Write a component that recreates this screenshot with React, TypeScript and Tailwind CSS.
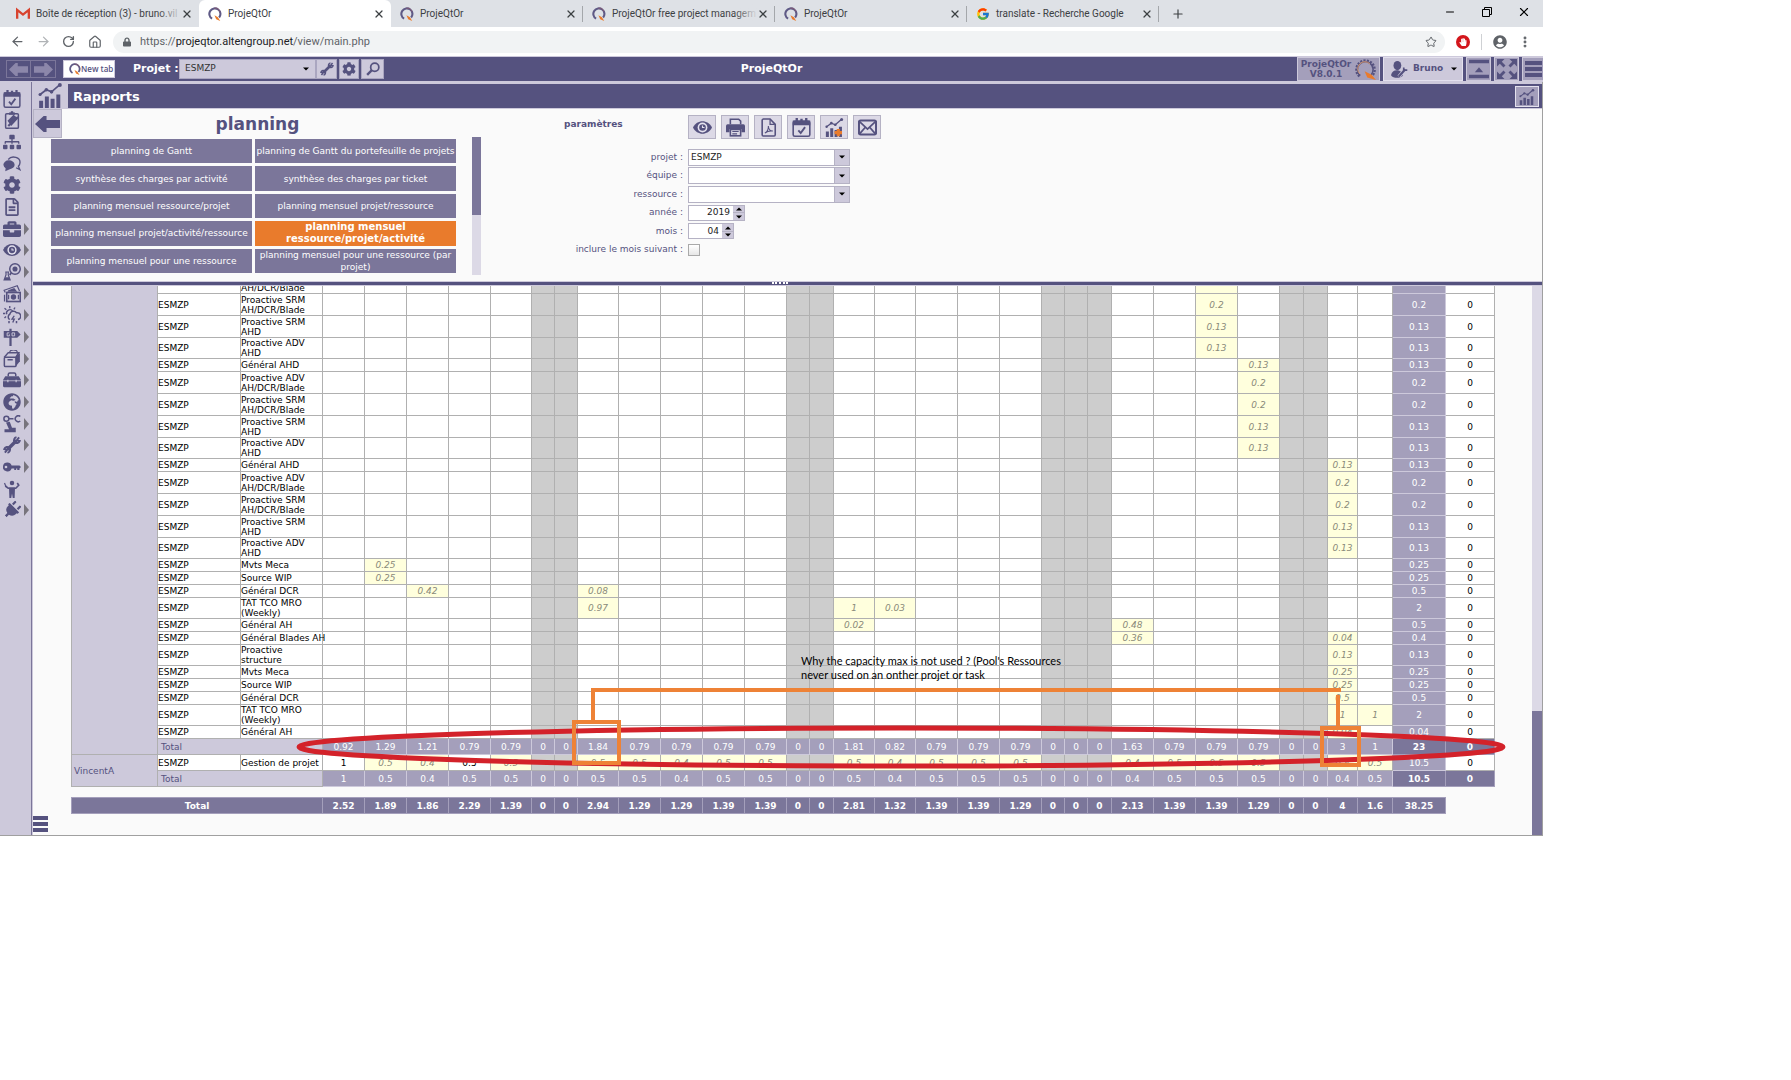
import React from 'react';
import {
  FaBriefcase, FaCog, FaGlobeAfrica, FaLock, FaPlug, FaRegFileAlt, FaSitemap, FaUserCircle, FaHandPaper,
} from 'react-icons/fa';
import { FcGoogle } from 'react-icons/fc';
import { X, Plus, Minus, Star, Home, RotateCw, ArrowLeft, ArrowRight, MoreVertical } from 'lucide-react';

type IconProps = { className?: string };

const Svg: React.FC<{ className?: string; children: React.ReactNode }> = ({ className, children }) => (
  <svg viewBox="0 0 24 24" fill="none" stroke="currentColor" strokeWidth="2" className={className} aria-hidden="true">
    {children}
  </svg>
);

const QLogo: React.FC<IconProps> = ({ className }) => (
  <svg viewBox="1 0 22 24" fill="none" className={className} aria-hidden="true">
    <path d="M7 20 A9.5 9.5 0 1 1 19 18" stroke="#5f5a86" strokeWidth="3.6" />
    <path d="M11 2 A9 9 0 0 1 20.5 8" stroke="#8c5a70" strokeWidth="1.4" />
    <path d="M11 14 L17 17.5 L21 24 L14 21 Z" fill="#e97b2c" />
  </svg>
);

const GearLogo: React.FC<IconProps> = ({ className }) => (
  <Svg className={className}>
    <path d="M5 20 A10.5 10.5 0 1 1 20 19" stroke="#55527f" strokeWidth="2.6" strokeDasharray="2.4 1.4" />
    <path d="M6 19 A9 9 0 1 1 18.5 18" stroke="#55527f" strokeWidth="1.8" />
    <path d="M5.5 17 A8 8 0 0 1 17 5.5" stroke="#e9a06a" strokeWidth="1" />
    <path d="M11 14 L19 18 L24 24 L14 21 Z" fill="#e97b2c" stroke="none" />
  </Svg>
);

const GmailIcon: React.FC<IconProps> = ({ className }) => (
  <Svg className={className}>
    <path d="M2 20 V5 L12 13 L22 5 V20" stroke="#d8432f" strokeWidth="4" />
  </Svg>
);

const CalendarIcon: React.FC<IconProps> = ({ className }) => (
  <Svg className={className}>
    <rect x="1.5" y="4" width="21" height="19" rx="2" />
    <path d="M2 4 H22 V8 H2 Z" fill="currentColor" />
    <path d="M6 0 V5 M12 1 V5 M18 0 V5" strokeWidth="3" />
    <path d="M8 15.5 L11 19 L16.5 11.5" strokeWidth="2.4" />
  </Svg>
);

const TicketIcon: React.FC<IconProps> = ({ className }) => (
  <Svg className={className}>
    <rect x="3.5" y="3.5" width="17" height="19.5" rx="1.5" />
    <path d="M8 5 V2 H10 A2 2 0 0 1 14 2 H16 V5 Z" fill="currentColor" stroke="none" />
    <path d="M6 13 L14 5 L20 10 L11 20 Z" fill="currentColor" stroke="none" />
    <path d="M7 20 L20 8" strokeWidth="3" />
  </Svg>
);

const ChatIcon: React.FC<IconProps> = ({ className }) => (
  <Svg className={className}>
    <path d="M7 6 A8.5 7 0 0 1 22.5 11 A7 6 0 0 1 20.5 15 L22.5 19.5 L17.5 17" strokeWidth="1.8" />
    <path d="M0.5 13 A7.5 6 0 1 1 9 19 L3 21.5 L3.5 17.5 A6 6 0 0 1 0.5 13 Z" fill="currentColor" stroke="none" />
  </Svg>
);

const EyeIcon: React.FC<IconProps> = ({ className }) => (
  <Svg className={className}>
    <path d="M0 12 C5 1.5 19 1.5 24 12 C19 22.5 5 22.5 0 12 Z" fill="currentColor" stroke="none" />
    <circle cx="12" cy="12" r="6.2" fill="#e4e1ee" stroke="none" />
    <circle cx="12" cy="12" r="4.2" fill="currentColor" stroke="none" />
    <path d="M12 9.5 V12 H14.5" stroke="#e4e1ee" strokeWidth="1.4" />
  </Svg>
);

const FlaskIcon: React.FC<IconProps> = ({ className }) => (
  <Svg className={className}>
    <circle cx="16" cy="8" r="7" />
    <circle cx="16" cy="8" r="3.4" fill="currentColor" stroke="none" />
    <path d="M4 12 V16 L1.5 22.5 H9.5 L7 16 V12 M3 12 H8" strokeWidth="1.6" />
    <path d="M3 19 H8 L9.5 22.5 H1.5 Z" fill="currentColor" stroke="none" />
    <path d="M11 13 L9 16" strokeWidth="2.4" />
  </Svg>
);

const MoneyIcon: React.FC<IconProps> = ({ className }) => (
  <Svg className={className}>
    <path d="M3 10 L1.5 7 L19 1 L22 8" strokeWidth="1.6" />
    <path d="M7 7 L15 4 L19 9 H6 Z" fill="currentColor" stroke="none" />
    <rect x="5" y="10" width="18" height="12" strokeWidth="2.2" />
    <circle cx="14" cy="16" r="3.6" fill="currentColor" stroke="none" />
    <path d="M7.5 13 V19 M20.5 13 V19" strokeWidth="1.6" />
    <path d="M2 13 V22" strokeWidth="1.6" />
  </Svg>
);

const WeatherIcon: React.FC<IconProps> = ({ className }) => (
  <Svg className={className}>
    <path d="M9 0 V3 M2 3 L4.5 5 M0 10 H3 M16 2 L14.5 4.5 M2 16 L4 14" strokeWidth="1.8" />
    <path d="M5 11 A4.5 4.5 0 0 1 13 7" strokeWidth="1.8" />
    <path d="M9 18 A4 4 0 0 1 9 11 A5 5 0 0 1 18 9 A4.5 4.5 0 0 1 20 18" />
    <path d="M15 13 L12 17.5 H15 L13 22" strokeWidth="1.8" />
    <path d="M8 20 V23 M18 20 V23" />
  </Svg>
);

const SignIcon: React.FC<IconProps> = ({ className }) => (
  <Svg className={className}>
    <path d="M1 4 H19 L23.5 8.5 L19 13 H1 Z" fill="currentColor" stroke="none" />
    <path d="M10 1 V24" strokeWidth="3" />
    <path d="M8.5 6.5 H5.5 V10.5 H8.5 V8.5 M12 6.5 H15.5 V10.5 H12 Z" stroke="#cdc9db" strokeWidth="1.2" />
  </Svg>
);

const BoxIcon: React.FC<IconProps> = ({ className }) => (
  <Svg className={className}>
    <path d="M1.5 10 L7 3.5 H21 L17 10" />
    <path d="M9 3 A5 3 0 0 1 19 3" strokeWidth="1.6" />
    <path d="M17 9 L22.5 4 V15 L17 22 Z" fill="currentColor" stroke="none" />
    <rect x="1.8" y="9.5" width="15.5" height="12.5" rx="1.5" />
    <path d="M6 13 H13" />
  </Svg>
);

const ToolboxIcon: React.FC<IconProps> = ({ className }) => (
  <Svg className={className}>
    <path d="M7 7 V4.5 A2 2 0 0 1 9 2.8 H15 A2 2 0 0 1 17 4.5 V7" />
    <path d="M3 7 H21 L24 12 V20 A1.5 1.5 0 0 1 22.5 21.5 H1.5 A1.5 1.5 0 0 1 0 20 V12 Z" fill="currentColor" stroke="none" />
    <path d="M0 13 H24" stroke="#cdc9db" strokeWidth="1" />
    <path d="M6.5 11.5 V15 M17.5 11.5 V15" stroke="#cdc9db" strokeWidth="1.6" />
  </Svg>
);

const RobotIcon: React.FC<IconProps> = ({ className }) => (
  <Svg className={className}>
    <circle cx="4.5" cy="5" r="3.3" />
    <path d="M8 5 H14" />
    <path d="M23 2 A4 4 0 1 0 23 8" />
    <path d="M4 10 L9 9 L12 17 H17 V23 H2 V19 H8 Z" fill="currentColor" stroke="none" />
  </Svg>
);

const KeyIcon: React.FC<IconProps> = ({ className }) => (
  <Svg className={className}>
    <path d="M6 6 A6 6 0 1 0 11.5 14 H15 V16 H17.5 V14 H19 V16 H22 V14 L24 12 L22 10 H11.5 A6 6 0 0 0 6 6 Z M4 10.2 A1.8 1.8 0 1 1 4 13.8 A1.8 1.8 0 1 1 4 10.2 Z" fill="currentColor" fillRule="evenodd" stroke="none" />
  </Svg>
);

const PlugIcon: React.FC<IconProps> = ({ className }) => (
  <span className={className}><FaPlug className="w-full h-full rotate-45" /></span>
);

const PersonIcon: React.FC<IconProps> = ({ className }) => (
  <Svg className={className}>
    <circle cx="12" cy="4" r="3" fill="currentColor" stroke="none" />
    <path d="M3 8 L7 11 H17 L21 7 L19 4" strokeWidth="2.2" />
    <path d="M8 10 H16 L15.5 24 H13 L12 18 L11 24 H8.5 Z" fill="currentColor" stroke="none" />
    <path d="M2 4 L4 9" strokeWidth="1.6" />
  </Svg>
);

const ChartIcon: React.FC<IconProps & { badge?: boolean }> = ({ className, badge }) => (
  <Svg className={className}>
    <path d="M3 17 V24 M8.5 13 V24 M14 15 V24 M19.5 11 V24" strokeWidth="3.8" />
    <path d="M2 11 L8 6.5 L13 8.5 L21 1.5" strokeWidth="1.6" />
    <circle cx="2" cy="11" r="1.5" fill="currentColor" stroke="none" />
    <circle cx="8" cy="6.5" r="1.7" fill="currentColor" stroke="none" />
    <circle cx="13" cy="8.5" r="1.7" fill="currentColor" stroke="none" />
    <circle cx="21" cy="2" r="1.9" fill="currentColor" stroke="none" />
    {badge && <path d="M12 18.5 H21.5 M16.8 14 V23" stroke="#e97b2c" strokeWidth="4" />}
  </Svg>
);

const PrinterIcon: React.FC<IconProps> = ({ className }) => (
  <Svg className={className}>
    <path d="M5.5 8 V1.5 H16 L18.5 4 V8" />
    <path d="M2 8 H22 A2 2 0 0 1 24 10 V18 H19.5 V14 H4.5 V18 H0 V10 A2 2 0 0 1 2 8 Z" fill="currentColor" stroke="none" />
    <rect x="5.5" y="14.5" width="13" height="8" />
    <path d="M8 17 H16 M8 20 H14" strokeWidth="1.4" />
  </Svg>
);

const PdfIcon: React.FC<IconProps> = ({ className }) => (
  <Svg className={className}>
    <path d="M4 3 A1.8 1.8 0 0 1 5.5 1.2 H14 L20.5 8 V21 A1.8 1.8 0 0 1 19 22.8 H5.5 A1.8 1.8 0 0 1 4 21 Z" />
    <path d="M14 1.5 V8 H20" strokeWidth="1.6" />
    <path d="M7.5 19 C10 17.5 12 13.5 11.8 10 C12 14 14 16.5 17.5 16.5 C14 16 10 17 7.5 19" strokeWidth="1.3" />
  </Svg>
);

const MailIcon: React.FC<IconProps> = ({ className }) => (
  <Svg className={className}>
    <rect x="1.2" y="3.2" width="21.6" height="17.6" rx="2" strokeWidth="2.6" />
    <path d="M2 4.5 L12 14 L22 4.5 M2 20 L9 12 M22 20 L15 12" strokeWidth="2.2" />
  </Svg>
);

const WrenchIcon: React.FC<IconProps> = ({ className }) => (
  <Svg className={className}>
    <path d="M6 18 L18 6" strokeWidth="4.4" />
    <path d="M21.5 1.8 L18.5 5.5 L22.3 6.5 A4.2 4.2 0 0 1 15.2 8 A4.4 4.4 0 0 1 18 1.5 M2.5 22.2 L5.5 18.5 L1.7 17.5 A4.2 4.2 0 0 1 8.8 16 A4.4 4.4 0 0 1 6 22.5" strokeWidth="2.6" />
  </Svg>
);

const SearchIcon: React.FC<IconProps> = ({ className }) => (
  <Svg className={className}>
    <circle cx="15" cy="9" r="7" strokeWidth="3" />
    <path d="M10 14 L2 22" strokeWidth="4" />
  </Svg>
);

const UserIcon: React.FC<IconProps> = ({ className }) => (
  <Svg className={className}>
    <ellipse cx="9" cy="6.5" rx="5.5" ry="6.5" fill="currentColor" stroke="none" />
    <path d="M0 20 C1 15 4 13 8 13 C12 13 16 15 17 20 C14 25 3 25 0 20 Z" fill="currentColor" stroke="none" />
    <path d="M11 22 L20 12" stroke="#cdc9db" strokeWidth="5" />
    <path d="M11 22 L20 12" strokeWidth="3" />
    <path d="M18 9 V13 H23" strokeWidth="2.4" />
  </Svg>
);

const ExpandIcon: React.FC<IconProps> = ({ className }) => (
  <Svg className={className}>
    <path d="M9 9 L2.5 2.5 M15 9 L21.5 2.5 M9 15 L2.5 21.5 M15 15 L21.5 21.5" strokeWidth="3.4" />
    <path d="M0 0 H9 L0 9 Z M24 0 H15 L24 9 Z M0 24 V15 L9 24 Z M24 24 V15 L15 24 Z" fill="currentColor" stroke="none" />
  </Svg>
);

const CollapseIcon: React.FC<IconProps> = ({ className }) => (
  <Svg className={className}>
    <path d="M0 3 H24 M0 21 H24" strokeWidth="4" />
    <path d="M7 16 L12 10 L17 16 Z" fill="currentColor" stroke="none" />
  </Svg>
);

const BarsIcon: React.FC<IconProps> = ({ className }) => (
  <svg viewBox="0 0 16 16" preserveAspectRatio="none" fill="currentColor" className={className} aria-hidden="true">
    <path d="M0 0 H16 V4 H0 Z M0 6 H16 V10 H0 Z M0 12 H16 V16 H0 Z" />
  </svg>
);

const BlockArrow: React.FC<IconProps & { right?: boolean }> = ({ className, right }) => (
  <svg viewBox="0 0 26 16" preserveAspectRatio="none" fill="currentColor" className={className} aria-hidden="true">
    <path d={right ? 'M26 8 L17 0 H14 V4 H0 V12 H14 V16 H17 Z' : 'M0 8 L9 0 H12 V4 H26 V12 H12 V16 H9 Z'} />
  </svg>
);

const Caret: React.FC<{ up?: boolean }> = ({ up }) => (
  <svg viewBox="0 0 8 4" className="w-[6px] h-[4px] fill-black" aria-hidden="true">
    <path d={up ? 'M0 4 L4 0 L8 4 Z' : 'M0 0 H8 L4 4 Z'} />
  </svg>
);

const tabs = [
  { label: 'Boîte de réception (3) - bruno.vil', icon: GmailIcon, fade: true },
  { label: 'ProjeQtOr', icon: QLogo, active: true },
  { label: 'ProjeQtOr', icon: QLogo, sep: true },
  { label: 'ProjeQtOr free project managem', icon: QLogo, sep: true, fade: true },
  { label: 'ProjeQtOr', icon: QLogo, sep: true },
  { label: 'translate - Recherche Google', icon: FcGoogle, sep: true },
];

const BrowserChrome = () => (
  <div className="font-['Roboto',sans-serif] text-[#3c4043]">
    <div className="flex h-[27px] bg-[#dee1e6] pl-[7px]">
      {tabs.map(({ label, icon: Icon, active, sep, fade }, i) => (
        <div key={i} className={`relative flex items-center w-48 pl-[9px] pr-[6px] gap-[6px] ${active ? 'bg-white rounded-t-md' : ''}`}>
          <Icon className="w-[14px] h-[14px] shrink-0" />
          <span className="flex-1 min-w-0 whitespace-nowrap text-[10px] leading-4">{label}</span>
          {fade && <span className="absolute right-[17px] w-6 h-5 bg-linear-to-r from-transparent to-[#dee1e6]" />}
          <button aria-label="Fermer l'onglet" className="relative"><X className="w-3 h-3" strokeWidth={2.5} /></button>
          {sep && <span className="absolute right-0 w-px h-4 bg-[#a4a7ab]" />}
        </div>
      ))}
      <button aria-label="Nouvel onglet" className="px-3"><Plus className="w-[14px] h-[14px]" /></button>
      <div className="flex items-center gap-[23px] ml-auto pr-3 pb-1 text-black">
        <button aria-label="Réduire"><Minus className="w-[14px] h-3" strokeWidth={2} /></button>
        <button aria-label="Restaurer">
          <svg viewBox="0 0 10 10" className="w-[10px] h-[10px] mx-0.5" fill="none" stroke="currentColor"><path d="M0.5 2.5 H7.5 V9.5 H0.5 Z M2.5 2.5 V0.5 H9.5 V7.5 H7.5" /></svg>
        </button>
        <button aria-label="Fermer"><X className="w-[14px] h-[14px]" strokeWidth={2} /></button>
      </div>
    </div>
    <div className="flex items-center h-[29px] bg-white pl-[10px] pr-[11px] text-[#5f6368]">
      <button aria-label="Précédent" className="w-[26px]"><ArrowLeft className="w-[15px] h-[15px]" /></button>
      <button aria-label="Suivant" className="w-[26px] text-[#b0b3b6]"><ArrowRight className="w-[15px] h-[15px]" /></button>
      <button aria-label="Actualiser" className="w-[26px]"><RotateCw className="w-[13px] h-[13px]" strokeWidth={2.5} /></button>
      <button aria-label="Accueil" className="w-[25px]"><Home className="w-[14px] h-[14px]" /></button>
      <div className="flex flex-1 items-center h-[22px] rounded-full bg-[#f1f3f4] pl-[10px] pr-2">
        <FaLock className="w-[8px] h-[10px]" />
        <span className="flex-1 pl-[9px] text-[11px] leading-4">
          https://<span className="text-[#202124]">projeqtor.altengroup.net</span>/view/main.php
        </span>
        <Star className="w-3 h-3" />
      </div>
      <span className="flex items-center justify-center w-[14px] h-[14px] ml-[11px] rounded-full bg-[#d3161c]"><FaHandPaper className="w-2 h-2 text-white" /></span>
      <span className="w-px h-4 mx-[11px] bg-[#cfd1d4]" />
      <FaUserCircle className="w-[14px] h-[14px]" />
      <MoreVertical className="w-[14px] h-[14px] ml-[11px]" strokeWidth={3} />
    </div>
  </div>
);

const navButton = 'flex items-center justify-center h-5 bg-[#cdc9db] border border-[#aaa6c0] text-[#55527f]';
const navPanel = 'flex items-center justify-center h-6 border border-[#cdc9db] bg-[#a49fbb] text-[#55527f]';

const TopBar = () => (
  <header className="grid grid-cols-[1fr_auto_1fr] items-center h-[26px] border-y border-[#cdc9db] bg-[#55527f]">
    <div className="flex items-center">
      <div className="flex ml-[6px] h-[18px] border border-[#7b769a] text-[#8c87aa]">
        <button aria-label="Retour" className="flex items-center justify-center w-6 border-r border-[#7b769a]"><BlockArrow className="w-[19px] h-[13px]" /></button>
        <button aria-label="Avancer" className="flex items-center justify-center w-6"><BlockArrow right className="w-[19px] h-[13px]" /></button>
      </div>
      <button className="flex items-center w-[52px] h-[18px] ml-[7px] pl-[5px] bg-white border border-[#cdc9db] font-['Open_Sans',sans-serif] text-[8px] font-semibold text-[#55527f] whitespace-nowrap">
        <QLogo className="w-3 h-3 shrink-0" />New tab
      </button>
      <label htmlFor="nav-projet" className="ml-[18px] w-[46px] text-[11px] font-bold text-white whitespace-nowrap">Projet :</label>
      <div className="relative flex w-[137px]">
        <select id="nav-projet" className="appearance-none w-full h-5 pl-[5px] bg-[#cdc9db] text-[9px] text-[#333] border border-[#aaa6c0]">
          <option>ESMZP</option>
        </select>
        <span className="absolute right-[7px] top-2 pointer-events-none"><Caret /></span>
      </div>
      <button aria-label="Paramètres du projet" className={`${navButton} w-[21px]`}><WrenchIcon className="w-[14px] h-[14px]" /></button>
      <button aria-label="Configuration" className={`${navButton} w-5 ml-[2px]`}><FaCog className="w-[14px] h-[14px]" /></button>
      <button aria-label="Rechercher" className={`${navButton} w-[23px] ml-[2px]`}><SearchIcon className="w-[14px] h-[14px]" /></button>
    </div>
    <h1 className="text-[11px] font-bold text-white">ProjeQtOr</h1>
    <div className="flex justify-end gap-[3px]">
      <div className={`${navPanel} w-[83px] gap-1 text-[9px] leading-[10px] font-bold text-center`}>
        <span>ProjeQtOr<br />V8.0.1</span>
        <GearLogo className="w-[21px] h-[21px] shrink-0" />
      </div>
      <button className="flex items-center w-20 h-6 pl-[7px] pr-[5px] gap-[5px] bg-[#cdc9db] border border-[#e4e1ee] text-[9px] font-bold text-[#55527f]">
        <UserIcon className="w-[17px] h-[17px]" />Bruno<span className="ml-auto"><Caret /></span>
      </button>
      <button aria-label="Masquer le bandeau" className={`${navPanel} w-[25px]`}><CollapseIcon className="w-5 h-5" /></button>
      <button aria-label="Plein écran" className={`${navPanel} w-[25px]`}><ExpandIcon className="w-5 h-5" /></button>
      <button aria-label="Menu" className={`${navPanel} w-[21px] border-r-0`}><BarsIcon className="w-[17px] h-4" /></button>
    </div>
  </header>
);

const menu: { label: string; icon: React.ComponentType<IconProps>; sub?: boolean }[] = [
  { label: 'Planning', icon: CalendarIcon },
  { label: 'Tickets', icon: TicketIcon },
  { label: 'Organisation', icon: FaSitemap },
  { label: 'Messages', icon: ChatIcon },
  { label: 'Réglages', icon: FaCog },
  { label: 'Documents', icon: FaRegFileAlt },
  { label: 'Travail', icon: FaBriefcase, sub: true },
  { label: 'Suivi', icon: EyeIcon, sub: true },
  { label: 'Exigences et tests', icon: FlaskIcon, sub: true },
  { label: 'Finances', icon: MoneyIcon, sub: true },
  { label: 'Risques', icon: WeatherIcon, sub: true },
  { label: 'Décisions', icon: SignIcon, sub: true },
  { label: 'Produits', icon: BoxIcon, sub: true },
  { label: 'Outils', icon: ToolboxIcon, sub: true },
  { label: 'Environnement', icon: FaGlobeAfrica, sub: true },
  { label: 'Automatisation', icon: RobotIcon, sub: true },
  { label: 'Paramétrage', icon: WrenchIcon, sub: true },
  { label: 'Accès', icon: KeyIcon, sub: true },
  { label: 'Utilisateur', icon: PersonIcon },
  { label: 'Plugins', icon: PlugIcon, sub: true },
];

const Sidebar = () => (
  <nav className="w-8 shrink-0 bg-[#cdc9db] border-r border-[#7b769a] pt-[6px]">
    <div className="flex flex-col h-[433px]">
      {menu.map(({ label, icon: Icon, sub }) => (
        <button key={label} aria-label={label} className="flex flex-1 items-center pl-[3px] text-[#55527f]">
          <Icon className="w-[18px] h-[18px]" />
          {sub && <svg viewBox="0 0 5 12" className="w-[5px] h-3 ml-[3px] fill-[#77747c]"><path d="M0 0 L5 6 L0 12 Z" /></svg>}
        </button>
      ))}
    </div>
  </nav>
);

const reports = [
  'planning de Gantt',
  'planning de Gantt du portefeuille de projets',
  'synthèse des charges par activité',
  'synthèse des charges par ticket',
  'planning mensuel ressource/projet',
  'planning mensuel projet/ressource',
  'planning mensuel projet/activité/ressource',
  'planning mensuel ressource/projet/activité',
  'planning mensuel pour une ressource',
  'planning mensuel pour une ressource (par projet)',
];
const activeReport = 7;

const actions = [
  { label: 'Afficher', icon: EyeIcon },
  { label: 'Imprimer', icon: PrinterIcon },
  { label: 'Exporter en PDF', icon: PdfIcon },
  { label: 'Planifier', icon: CalendarIcon },
  { label: 'Ajouter aux rapports du jour', icon: (p: IconProps) => <ChartIcon {...p} badge /> },
  { label: 'Envoyer par mail', icon: MailIcon },
];

const SelectField: React.FC<{ id: string; value?: string }> = ({ id, value = '' }) => (
  <div className="relative flex w-[162px]">
    <select id={id} className="appearance-none w-full h-[17px] pl-[2px] bg-white border border-[#b5b2c4] text-[9px] text-[#222]">
      <option>{value}</option>
    </select>
    <span className="absolute right-px top-px flex items-center justify-center w-[15px] h-[15px] bg-[#cdc9db] border-l border-[#b5b2c4] pointer-events-none"><Caret /></span>
  </div>
);

const SpinnerField: React.FC<{ id: string; value: string; width: string }> = ({ id, value, width }) => (
  <div className={`flex h-[16px] border border-[#b5b2c4] bg-white ${width}`}>
    <input id={id} defaultValue={value} className="flex-1 min-w-0 pr-[3px] text-right text-[9px] text-[#222]" />
    <div className="flex flex-col w-[11px] bg-[#cdc9db]">
      <button aria-label="Augmenter" className="flex flex-1 items-center justify-center border-b border-[#b5b2c4]"><Caret up /></button>
      <button aria-label="Diminuer" className="flex flex-1 items-center justify-center"><Caret /></button>
    </div>
  </div>
);

const Field: React.FC<{ id: string; label: string; children: React.ReactNode }> = ({ id, label, children }) => (
  <div className="grid grid-cols-[161px_1fr] gap-[5px] flex-1 items-center">
    <label htmlFor={id} className="text-right text-[9px] text-[#55527f]">{label} :</label>
    {children}
  </div>
);

const ReportPanel = () => (
  <section className="flex h-[172px] bg-[#fafafa]">
    <button aria-label="Retour" className="flex items-center justify-center w-[29px] h-[29px] bg-[#cdc9db] border border-[#b5b2c4] text-[#55527f]">
      <BlockArrow className="w-[25px] h-4" />
    </button>
    <div className="w-[405px] ml-[-11px]">
      <h2 className="h-[30px] pt-1 pl-2 text-center text-[17px] leading-[22px] font-bold text-[#55527f]">planning</h2>
      <div className="grid grid-cols-2 grid-rows-5 gap-[3px] h-[134px]">
        {reports.map((r, i) => (
          <button
            key={r}
            className={`flex items-center justify-center px-px text-center text-white ${i === activeReport ? 'bg-[#e97b2c] text-[10px] leading-3 font-bold' : 'bg-[#7b769a] text-[9px] leading-3'}`}
          >
            {r}
          </button>
        ))}
      </div>
    </div>
    <div className="w-[9px] h-[138px] mt-7 ml-4 bg-[#dcd9e6]"><div className="h-[78px] bg-[#7b769a]" /></div>
    <div className="ml-[41px] pt-[6px]">
      <div className="flex h-6">
        <h3 className="w-[166px] pt-[3px] pl-[42px] text-[9px] font-bold text-[#55527f]">paramètres</h3>
        <div className="flex gap-[5px]">
          {actions.map(({ label, icon: Icon }) => (
            <button key={label} aria-label={label} className="flex items-center justify-center w-7 h-6 bg-[#dcd9e6] border border-[#b5b2c4] text-[#55527f]">
              <Icon className="w-[19px] h-[19px]" />
            </button>
          ))}
        </div>
      </div>
      <div className="flex flex-col h-[111px] mt-[9px]">
        <Field id="projet" label="projet"><SelectField id="projet" value="ESMZP" /></Field>
        <Field id="equipe" label="équipe"><SelectField id="equipe" /></Field>
        <Field id="ressource" label="ressource"><SelectField id="ressource" /></Field>
        <Field id="annee" label="année"><SpinnerField id="annee" value="2019" width="w-[57px]" /></Field>
        <Field id="mois" label="mois"><SpinnerField id="mois" value="04" width="w-[46px]" /></Field>
        <Field id="suivant" label="inclure le mois suivant">
          <input id="suivant" type="checkbox" className="appearance-none w-3 h-3 border border-[#a9a9a9] bg-linear-to-b from-white to-[#e6e6e6]" />
        </Field>
      </div>
    </div>
  </section>
);

const DAYS = 30;
const offDays = [5, 6, 12, 13, 19, 20, 21, 26, 27];
const dayWidths = [
  42, 42, 42, 42, 41, 23, 23, 41, 42, 42, 42, 42, 23, 24, 41,
  41, 42, 42, 42, 23, 23, 24, 42, 42, 42, 42, 24, 24, 30, 35,
];

type Row = { task: string; days: Record<number, string>; sum: string };

const rows: Row[] = [
  { task: 'Proactive ADV\nAH/DCR/Blade', days: { 24: '0.2' }, sum: '0.2' },
  { task: 'Proactive SRM\nAH/DCR/Blade', days: { 24: '0.2' }, sum: '0.2' },
  { task: 'Proactive SRM\nAHD', days: { 24: '0.13' }, sum: '0.13' },
  { task: 'Proactive ADV\nAHD', days: { 24: '0.13' }, sum: '0.13' },
  { task: 'Général AHD', days: { 25: '0.13' }, sum: '0.13' },
  { task: 'Proactive ADV\nAH/DCR/Blade', days: { 25: '0.2' }, sum: '0.2' },
  { task: 'Proactive SRM\nAH/DCR/Blade', days: { 25: '0.2' }, sum: '0.2' },
  { task: 'Proactive SRM\nAHD', days: { 25: '0.13' }, sum: '0.13' },
  { task: 'Proactive ADV\nAHD', days: { 25: '0.13' }, sum: '0.13' },
  { task: 'Général AHD', days: { 28: '0.13' }, sum: '0.13' },
  { task: 'Proactive ADV\nAH/DCR/Blade', days: { 28: '0.2' }, sum: '0.2' },
  { task: 'Proactive SRM\nAH/DCR/Blade', days: { 28: '0.2' }, sum: '0.2' },
  { task: 'Proactive SRM\nAHD', days: { 28: '0.13' }, sum: '0.13' },
  { task: 'Proactive ADV\nAHD', days: { 28: '0.13' }, sum: '0.13' },
  { task: 'Mvts Meca', days: { 1: '0.25' }, sum: '0.25' },
  { task: 'Source WIP', days: { 1: '0.25' }, sum: '0.25' },
  { task: 'Général DCR', days: { 2: '0.42', 7: '0.08' }, sum: '0.5' },
  { task: 'TAT TCO MRO\n(Weekly)', days: { 7: '0.97', 14: '1', 15: '0.03' }, sum: '2' },
  { task: 'Général AH', days: { 14: '0.02', 22: '0.48' }, sum: '0.5' },
  { task: 'Général Blades AH', days: { 22: '0.36', 28: '0.04' }, sum: '0.4' },
  { task: 'Proactive\nstructure', days: { 28: '0.13' }, sum: '0.13' },
  { task: 'Mvts Meca', days: { 28: '0.25' }, sum: '0.25' },
  { task: 'Source WIP', days: { 28: '0.25' }, sum: '0.25' },
  { task: 'Général DCR', days: { 28: '0.5' }, sum: '0.5' },
  { task: 'TAT TCO MRO\n(Weekly)', days: { 28: '1', 29: '1' }, sum: '2' },
  { task: 'Général AH', days: { 28: '0.04' }, sum: '0.04' },
];

const poolTotals = '0.92 1.29 1.21 0.79 0.79 0 0 1.84 0.79 0.79 0.79 0.79 0 0 1.81 0.82 0.79 0.79 0.79 0 0 0 1.63 0.79 0.79 0.79 0 0 3 1'.split(' ');
const vincentTotals = '1 0.5 0.4 0.5 0.5 0 0 0.5 0.5 0.4 0.5 0.5 0 0 0.5 0.4 0.5 0.5 0.5 0 0 0 0.4 0.5 0.5 0.5 0 0 0.4 0.5'.split(' ');
const grandTotals = '2.52 1.89 1.86 2.29 1.39 0 0 2.94 1.29 1.29 1.39 1.39 0 0 2.81 1.32 1.39 1.39 1.29 0 0 0 2.13 1.39 1.39 1.29 0 0 4 1.6'.split(' ');
const vincentDone = [0, 3];

const cell = 'border border-[#b0b0b0] text-center';
const planned = `${cell} bg-[#ffffdd] italic text-[#8a8a7a]`;
const off = `${cell} bg-[#cdcdcd]`;
const blank = `${cell} bg-white text-black`;
const text = 'border border-[#b0b0b0] bg-white text-left font-normal text-black whitespace-pre';
const light = 'border border-[#cdc9db] bg-[#a49fbb] text-center text-white';
const dark = 'border border-[#a49fbb] bg-[#7b769a] text-center font-bold text-white';
const header = 'border border-[#b0b0b0] bg-[#cdc9db] text-left font-normal text-[#55527f]';

const rowHeight = (task: string) => {
  if (!task.includes('\n')) return 'h-[13px]';
  return task.endsWith('Blade') || task.includes('SRM') ? 'h-[22px]' : 'h-[21px]';
};

const ColWidths = () => (
  <colgroup>
    {[86, 83, 82, ...dayWidths, 53, 49].map((w, i) => <col key={i} style={{ width: w }} />)}
  </colgroup>
);

const TotalCells: React.FC<{ values: string[]; sum: string }> = ({ values, sum }) => (
  <>
    {values.map((v, i) => <td key={i} className={light}>{v}</td>)}
    <td className={dark}>{sum}</td>
    <td className={dark}>0</td>
  </>
);

const ResultTable = () => (
  <table className="table-fixed border-collapse w-[1423px] text-[9px] leading-[10px]">
    <ColWidths />
    <tbody>
      {rows.map((row, r) => (
        <tr key={r} className={rowHeight(row.task)}>
          {r === 0 && <th rowSpan={rows.length + 1} scope="rowgroup" className={header} />}
          <td className={text}>ESMZP</td>
          <td className={text}>{row.task}</td>
          {Array.from({ length: DAYS }).map((_, d) => (
            <td key={d} className={row.days[d] ? planned : offDays.includes(d) ? off : blank}>{row.days[d]}</td>
          ))}
          <td className={light}>{row.sum}</td>
          <td className={blank}>0</td>
        </tr>
      ))}
      <tr className="h-4">
        <th colSpan={2} scope="row" className={`${header} pl-[3px]`}>Total</th>
        <TotalCells values={poolTotals} sum="23" />
      </tr>
      <tr className="h-4">
        <th rowSpan={2} scope="rowgroup" className={`${header} pl-[2px]`}>VincentA</th>
        <td className={text}>ESMZP</td>
        <td className={text}>Gestion de projet</td>
        {vincentTotals.map((v, d) => (
          <td key={d} className={offDays.includes(d) ? off : vincentDone.includes(d) ? blank : planned}>{offDays.includes(d) ? '' : v}</td>
        ))}
        <td className={light}>10.5</td>
        <td className={blank}>0</td>
      </tr>
      <tr className="h-4">
        <th colSpan={2} scope="row" className={`${header} pl-[3px]`}>Total</th>
        <TotalCells values={vincentTotals} sum="10.5" />
      </tr>
      <tr className="h-[11px]"><td colSpan={DAYS + 5} /></tr>
      <tr className="h-4">
        <th colSpan={3} scope="row" className={dark}>Total</th>
        {grandTotals.map((v, i) => <td key={i} className={dark}>{v}</td>)}
        <td className={dark}>38.25</td>
        <td />
      </tr>
    </tbody>
  </table>
);

// Hand-drawn remarks laid over the report
const Annotations = () => (
  <>
    <svg viewBox="0 0 1510 550" className="absolute left-0 top-0 w-[1510px] h-[550px] pointer-events-none" fill="none" aria-hidden="true">
      <ellipse cx="868" cy="461" rx="602" ry="19" stroke="#d3222a" strokeWidth="5" />
      <g stroke="#ee8236" strokeWidth="4">
        <path d="M560 434 V404 H1308" />
        <path d="M1305 409 V440" />
        <rect x="541" y="436" width="45" height="41" />
        <rect x="1289" y="442" width="37" height="37" />
      </g>
    </svg>
    <p className="absolute left-[768px] top-[368px] font-['Lato',sans-serif] text-[11px] leading-[14px] text-black whitespace-nowrap">
      Why the capacity max is not used ? (Pool's Ressources<br />never used on an onther projet or task
    </p>
  </>
);

const App: React.FC = () => (
  <div className="min-h-screen bg-white font-['DejaVu_Sans',sans-serif]">
    <div className="w-full max-w-[1543px] border-b border-[#a0a0a0]">
      <BrowserChrome />
      <TopBar />
      <div className="flex">
        <Sidebar />
        <main className="flex-1 min-w-0 pl-px pt-[2px] border-r border-[#a0a0a0] bg-[#cdc9db]">
          <div className="flex h-[25px] border-b border-[#cdc9db] bg-[#55527f]">
            <div className="flex items-end justify-center w-[35px] bg-[#cdc9db] text-[#55527f]"><ChartIcon className="w-[25px] h-[25px]" /></div>
            <h2 className="flex-1 pl-[5px] text-[13px] leading-[25px] font-bold text-white">Rapports</h2>
            <button aria-label="Rapports du jour" className="flex items-center justify-center w-6 h-[21px] mt-[2px] mr-[3px] bg-[#a49fbb] border border-[#e4e1ee] text-[#55527f]">
              <ChartIcon className="w-4 h-4" />
            </button>
          </div>
          <ReportPanel />
          <div className="flex justify-center h-[5px] pr-4 border-y border-[#cdc9db] bg-[#55527f]">
            <span className="w-4 border-t-2 border-dotted border-white" />
          </div>
          <section className="relative flex h-[549px] overflow-hidden bg-[#fafafa]">
            <div className="flex flex-1 flex-col justify-end min-w-0 pl-[38px] pb-[21px]">
              <ResultTable />
            </div>
            <Annotations />
            <div className="flex flex-col justify-end w-[10px] bg-[#dcd9e6]"><div className="h-[124px] bg-[#7b769a]" /></div>
            <button aria-label="Menu" className="absolute left-[-1px] bottom-[3px] text-[#55527f]"><BarsIcon className="w-4 h-4" /></button>
          </section>
        </main>
      </div>
    </div>
  </div>
);

export default App;
